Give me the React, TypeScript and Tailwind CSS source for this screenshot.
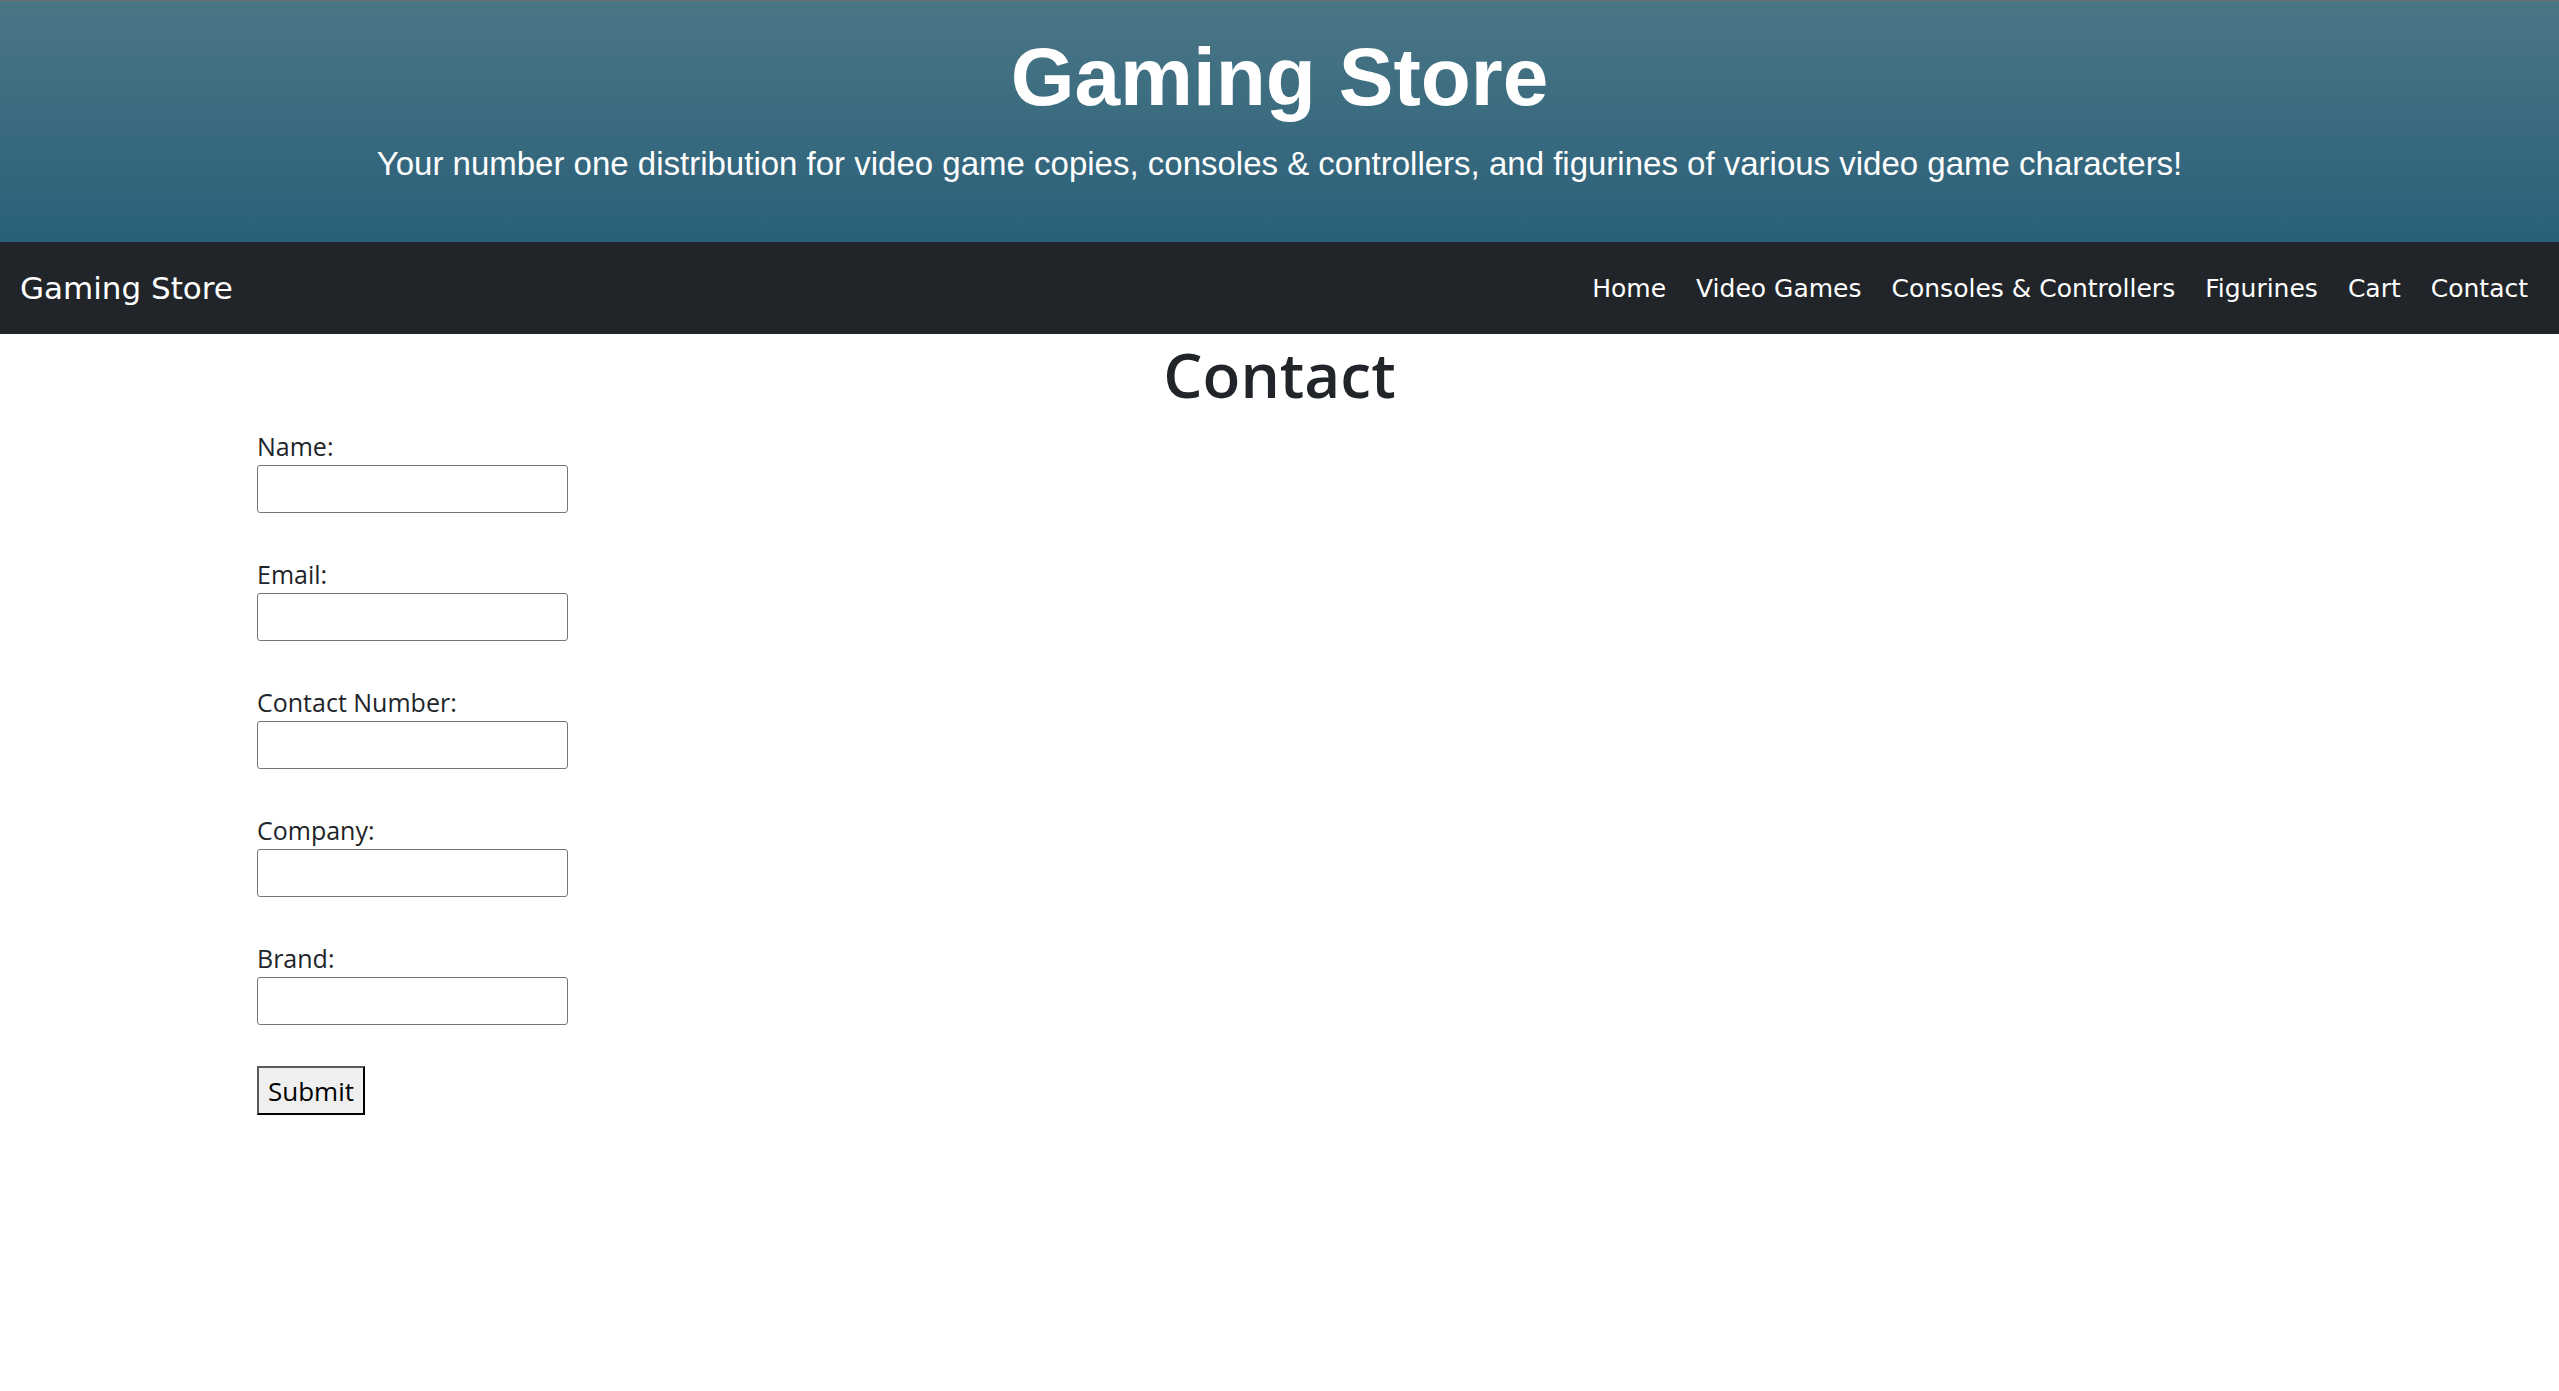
const links = ["Home", "Video Games", "Consoles & Controllers", "Figurines", "Cart", "Contact"];

const fields = ["Name:", "Email:", "Contact Number:", "Company:", "Brand:"];

export default function App() {
  return (
    <div className="min-h-screen bg-white text-[#212529] font-['Open_Sans',sans-serif]">
      {/* Banner */}
      <header className="h-[242px] border-t border-[#6e6e6e] bg-gradient-to-b from-[#4a7686] to-[#296079] flex flex-col items-center text-white font-['Liberation_Sans',Arial,sans-serif]">
        <h1 className="mt-[35px] text-[82px] font-bold leading-none">Gaming Store</h1>
        <p className="mt-[29px] text-[33px] leading-none">
          Your number one distribution for video game copies, consoles &amp; controllers, and figurines of various video game characters!
        </p>
      </header>

      {/* Navbar */}
      <nav className="h-[92px] bg-[#212529] flex items-center justify-between pl-[20px] pr-[31px] text-white font-['DejaVu_Sans',sans-serif]">
        <a href="#" className="text-[31px] leading-none">Gaming Store</a>
        <ul className="flex items-center gap-[30px] text-[25px] leading-none">
          {links.map((l) => (
            <li key={l}>
              <a href="#">{l}</a>
            </li>
          ))}
        </ul>
      </nav>

      <main>
        <h2 className="mt-[9px] text-center text-[62px] font-semibold leading-none">Contact</h2>

        <form className="mt-[29px] pl-[257px] flex flex-col items-start" onSubmit={(e) => e.preventDefault()}>
          {fields.map((f) => (
            <div key={f} className="mb-[49px] flex flex-col items-start">
              <label className="text-[25px] leading-none">{f}</label>
              <input
                type="text"
                className="mt-[6px] w-[311px] h-[48px] border border-[#767676] rounded-[3px] bg-white"
              />
            </div>
          ))}
          <button
            type="submit"
            className="-mt-[8px] w-[108px] h-[49px] bg-[#efefef] border-2 border-t-[#5a5a5a] border-l-[#5a5a5a] border-r-black border-b-black text-[26px] leading-none text-black"
          >
            Submit
          </button>
        </form>
      </main>
    </div>
  );
}
